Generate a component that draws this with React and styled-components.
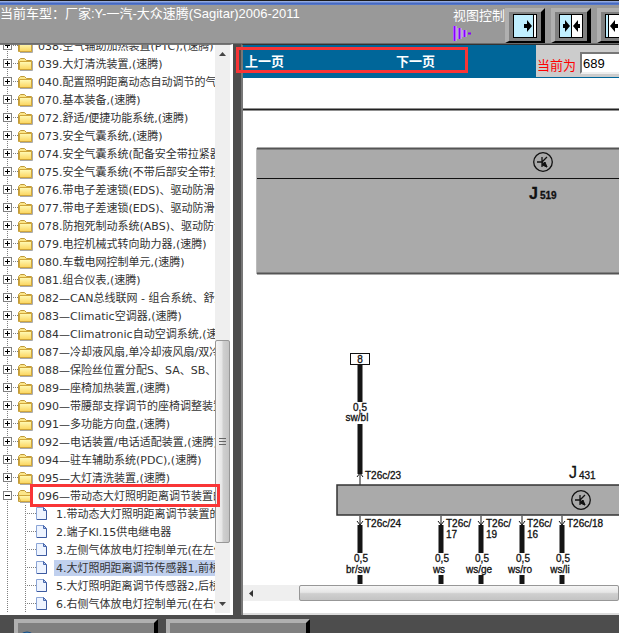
import React, { useState } from "react";
import styled, { createGlobalStyle } from "styled-components";

const GlobalStyle = createGlobalStyle`
  * {
    box-sizing: border-box;
  }
  body {
    margin: 0;
    font-family: "Liberation Sans", "Noto Sans CJK SC", sans-serif;
    font-size: 13px;
    overflow: hidden;
  }
`;

const Page = styled.div`
  display: flex;
  flex-direction: column;
  height: 100vh;
  overflow: hidden;
  background-color: #4d4d4d;
`;

const TitleStrip = styled.div`
  height: 5px;
  flex-shrink: 0;
  border-top: 1px solid #1a1a1a;
  background: linear-gradient(#a9bce8, #4468c0 60%, #5b7ccb);
`;

const Header = styled.header`
  display: flex;
  height: 39px;
  flex-shrink: 0;
  justify-content: space-between;
  background-color: #999;
  border-bottom: 1px solid #6b6b6b;
  color: #fff;
`;

const CarTitle = styled.h1`
  margin: 0;
  font-size: 13px;
  line-height: 17px;
  font-weight: normal;
  white-space: nowrap;
`;

const ViewControls = styled.div`
  display: flex;
  flex-shrink: 0;
  width: 166px;
  overflow: hidden;
  padding-top: 3px;
`;

const ControlLabel = styled.div`
  width: 52px;
  flex-shrink: 0;
  line-height: 16px;
  white-space: nowrap;

  svg {
    display: block;
    margin-top: 1px;
  }
`;

const ViewButton = styled.button`
  width: 40px;
  height: 35px;
  flex-shrink: 0;
  margin-right: 6px;
  padding: 2px 0 0;
  display: flex;
  justify-content: center;
  background-color: #808080;
  border: 4px solid;
  border-width: 4px 4px 2px 4px;
  border-color: #b0b0b0 #000 #000 #b0b0b0;
  cursor: pointer;
`;

const Body = styled.div`
  display: flex;
  flex: 1;
  min-height: 0;
`;

const Sidebar = styled.nav`
  position: relative;
  display: flex;
  width: 233px;
  flex-shrink: 0;
  background-color: #fff;
  border-top: 1px solid #777;
  border-right: 3px solid #fff;
  border-bottom: 2px solid #fff;
`;

const TreeArea = styled.div`
  flex: 1;
  min-width: 0;
  overflow: hidden;
`;

const Tree = styled.ul`
  list-style: none;
  margin: 0;
  padding: 0;
  font-family: "DejaVu Sans", "Noto Sans CJK SC", sans-serif;
  font-size: 11px;
`;

// the list is scrolled part of the way into its first row
const RootTree = styled(Tree)`
  margin-top: -8px;
`;

const Row = styled.div`
  display: flex;
  align-items: center;
  height: 18px;
  white-space: nowrap;
`;

const Toggle = styled.button`
  display: block;
  width: 18px;
  height: 18px;
  flex-shrink: 0;
  padding: 0;
  border: none;
  background: none;
`;

const RowIcon = styled.svg`
  display: block;
  flex-shrink: 0;
`;

const NodeLink = styled.a`
  margin-left: 3px;
  padding: 2px 2px 0;
  line-height: 14px;
  color: #333;
  text-decoration: none;
  background-color: ${(props) => (props.$selected ? "#c0d0ee" : "transparent")};
`;

const ScrollTrack = styled.div`
  display: flex;
  flex-direction: ${(props) => (props.$horizontal ? "row" : "column")};
  ${(props) => (props.$horizontal ? "height: 16px;" : "width: 15px;")}
  flex-shrink: 0;
  align-items: center;
  background-color: #efefef;
`;

const ScrollArrow = styled.button`
  width: 15px;
  height: 18px;
  flex-shrink: 0;
  display: flex;
  align-items: center;
  justify-content: center;
  padding: 0;
  border: none;
  background: none;
`;

const Spacer = styled.div`
  flex: ${(props) => props.$grow} 0 0;
`;

const Thumb = styled.div`
  display: flex;
  align-items: center;
  justify-content: center;
  border: 1px solid #979797;
  border-radius: 2px;
  flex: ${(props) => props.$grow} 0 0;
  align-self: stretch;
  background: linear-gradient(
    ${(props) => (props.$horizontal ? "to bottom" : "to right")},
    #f5f5f5,
    #e6e6e6 45%,
    #cfcfcf 55%,
    #c4c4c4
  );
`;

const RedBox = styled.div`
  position: absolute;
  border: 3px solid #f93536;
  pointer-events: none;
`;

const NodeMark = styled(RedBox)`
  top: 439px;
  left: 30px;
  width: 190px;
  height: 23px;
`;

const NavMark = styled(RedBox)`
  top: 2px;
  left: -7px;
  width: 232px;
  height: 26px;
`;

const Viewer = styled.main`
  display: flex;
  flex-direction: column;
  flex: 1;
  min-width: 0;
  margin-left: 8px;
  background-color: #fff;
  border-left: 2px solid #777;
  border-top: 1px solid #333;
`;

const PageNav = styled.div`
  position: relative;
  display: flex;
  height: 33px;
  flex-shrink: 0;
  background-color: #069;
`;

const NavLinks = styled.div`
  display: flex;
  flex: 1;
  min-width: 0;
  align-items: center;
`;

const NavLink = styled.a`
  width: 151px;
  flex-shrink: 0;
  padding: 0 0 2px 2px;
  color: #fff;
  font-weight: bold;
  text-decoration: none;

  & + & {
    width: auto;
  }
`;

const PageForm = styled.form`
  display: flex;
  align-items: center;
  width: 83px;
  height: 32px;
  flex-shrink: 0;
  overflow: hidden;
  padding: 4px 0 0 1px;
  background-color: #ccc;
  color: #f00;

  label {
    width: 43px;
    flex-shrink: 0;
    padding-top: 2px;
    white-space: nowrap;
  }
`;

const PageInput = styled.input`
  width: 60px;
  height: 22px;
  flex-shrink: 0;
  padding: 0 1px;
  border: 2px solid;
  border-color: #777 #eee #eee #777;
  background-color: #fff;
  font: 13px "Liberation Sans", sans-serif;
`;

const DiagramArea = styled.div`
  flex: 1;
  min-height: 0;
  overflow: hidden;
`;

const Diagram = styled.svg`
  display: block;
  font-family: "Liberation Sans", sans-serif;
  font-size: 10px;

  text {
    fill: #111;
    stroke: #111;
    stroke-width: 0.3px;
  }
`;

const ViewerFoot = styled.div`
  height: 14px;
  flex-shrink: 0;
  border-bottom: 2px solid #ddd;
`;

const BottomBar = styled.footer`
  display: flex;
  gap: 8px;
  height: 18px;
  flex-shrink: 0;
  padding: 4px 0 0 14px;
  overflow: hidden;
`;

const BarButton = styled.button`
  width: 144px;
  height: 36px;
  flex-shrink: 0;
  padding: 7px 0 0;
  text-align: left;
  background-color: #808080;
  border: 4px solid;
  border-color: #b0b0b0 #000 #000 #b0b0b0;

  svg {
    display: block;
  }
`;

const nodes = [
  "038.空气辅助加热装置(PTC),(速腾)",
  "039.大灯清洗装置,(速腾)",
  "040.配置照明距离动态自动调节的气体放电灯",
  "070.基本装备,(速腾)",
  "072.舒适/便捷功能系统,(速腾)",
  "073.安全气囊系统,(速腾)",
  "074.安全气囊系统(配备安全带拉紧器)",
  "075.安全气囊系统(不带后部安全带拉紧器)",
  "076.带电子差速锁(EDS)、驱动防滑系统",
  "077.带电子差速锁(EDS)、驱动防滑系统",
  "078.防抱死制动系统(ABS)、驱动防滑系统",
  "079.电控机械式转向助力器,(速腾)",
  "080.车载电网控制单元,(速腾)",
  "081.组合仪表,(速腾)",
  "082—CAN总线联网 - 组合系统、舒适系统",
  "083—Climatic空调器,(速腾)",
  "084—Climatronic自动空调系统,(速腾)",
  "087—冷却液风扇,单冷却液风扇/双冷却液风扇",
  "088—保险丝位置分配S、SA、SB、SC",
  "089—座椅加热装置,(速腾)",
  "090—带腰部支撑调节的座椅调整装置",
  "091—多功能方向盘,(速腾)",
  "092—电话装置/电话适配装置,(速腾)",
  "094—驻车辅助系统(PDC),(速腾)",
  "095—大灯清洗装置,(速腾)",
  "096—带动态大灯照明距离调节装置的大灯",
];

const pages = [
  "1.带动态大灯照明距离调节装置的大灯",
  "2.端子Kl.15供电继电器",
  "3.左侧气体放电灯控制单元(在左侧)",
  "4.大灯照明距离调节传感器1,前桥",
  "5.大灯照明距离调节传感器2,后桥",
  "6.右侧气体放电灯控制单元(在右侧)",
  "7.大灯照明距离调节控制单元",
];

const wires = [
  { x: 117, pin: ["T26c/24"], color: "br/sw" },
  { x: 198, pin: ["T26c/", "17"], color: "ws" },
  { x: 238, pin: ["T26c/", "19"], color: "ws/ge" },
  { x: 279, pin: ["T26c/", "16"], color: "ws/ro" },
  { x: 319, pin: ["T26c/18"], color: "ws/li" },
];

const ToggleIcon = ({ open }) => (
  <RowIcon width="18" height="18">
    <path d="M7.5 0V18M13 8.5H18" stroke="#808080" strokeDasharray="1 1" />
    <rect x="3.5" y="4.5" width="8" height="8" fill="#fff" stroke="#808080" />
    <path d={open ? "M5 8.5H10" : "M5 8.5H10M7.5 6V11"} stroke="#000" />
  </RowIcon>
);

const FolderIcon = ({ open }) => (
  <RowIcon width="15" height="18">
    <defs>
      <linearGradient id="folder" x1="0" y1="0" x2="0" y2="1">
        <stop offset="0" stopColor="#fffbb8" />
        <stop offset="1" stopColor="#fbd45c" />
      </linearGradient>
    </defs>
    <path d="M2 15.5H14.5V6" fill="none" stroke="#aaa" />
    <path d="M0.5 14.5V5.5L2.5 3.5H6.5L8.5 5.5H13.5V14.5Z" fill="#fbe68a" stroke="#c09a3a" />
    <path
      d={open ? "M0.5 8.5H14.5L12.5 14.5H2.5Z" : "M1.5 6.5H13.5V14.5H1.5Z"}
      fill="url(#folder)"
      stroke="#d0a63a"
    />
  </RowIcon>
);

const FileIcon = () => (
  <RowIcon width="51" height="18">
    <path d="M7.5 0V18M25.5 0V18M27 8.5H36" stroke="#808080" strokeDasharray="1 1" />
    <path d="M36.5 2.5H43.5L46.5 5.5V14.5H36.5Z" fill="#eef4ff" stroke="#8ba5d6" />
    <path d="M46.5 6V14.5H37" fill="none" stroke="#3c5aa0" />
    <path d="M43.5 2.5V5.5H46.5Z" fill="#b7cbf0" stroke="#4968ad" />
  </RowIcon>
);

const ViewIcon = ({ split, blue, arrows }) => (
  <svg width="24" height="24">
    <rect x="1" y="1" width="22" height="22" fill="#fff" />
    <rect x="1" y="1" width={blue} height="22" fill="#c0efff" />
    <rect x="0.5" y="0.5" width="23" height="23" fill="none" stroke="#000" />
    <path d={`M${split}.5 1V23`} stroke="#000" />
    <path d={arrows} fill="#000" />
  </svg>
);

const Transistor = ({ x, y }) => (
  <g transform={`translate(${x} ${y})`} stroke="#111" fill="none">
    <circle r="9.3" strokeWidth="1.3" />
    <path d="M-6 0H-1M-1 -5V5M4 -5L-1 0L4 5" strokeWidth="1.3" />
    <path d="M4 5L-1 3L2 0Z" fill="#111" />
  </g>
);

const WiringDiagram = () => (
  <Diagram width="800" height="507" role="img" aria-label="J519 / J431">
    <path d="M0 31.5H800" stroke="#222" strokeWidth="2" />
    <rect x="14" y="70" width="800" height="126" fill="#aaa" />
    <path d="M14 70.5H800M14 195.5H800" stroke="#555" strokeWidth="2" />
    <path d="M14 100.5H800" stroke="#111" />
    <path d="M13.5 70V196" stroke="#bbb" />
    <Transistor x={300} y={84} />
    <text x="286" y="121" fontSize="16" fontWeight="bold">J</text>
    <text x="297" y="121" fontWeight="bold">519</text>

    <rect x="107.5" y="275.5" width="19" height="11" fill="#fff" stroke="#111" />
    <text x="117" y="285" textAnchor="middle">8</text>
    <path d="M117 287V324M117 346V396" stroke="#151515" strokeWidth="5" />
    <path d="M114 399L117 395L120 399M117 395V407" fill="none" stroke="#151515" />
    <text x="117" y="333" textAnchor="middle">0,5</text>
    <text x="114" y="343" textAnchor="middle">sw/bl</text>
    <text x="122" y="401">T26c/23</text>

    <rect x="94" y="407" width="800" height="30" fill="#aaa" stroke="#333" strokeWidth="1.5" />
    <text x="326" y="400" fontSize="16">J</text>
    <text x="336" y="401">431</text>
    <Transistor x={338} y={422} />

    {wires.map(({ x, pin, color }) => (
      <g key={x}>
        <path d={`M${x} 438V448M${x - 3} 443L${x} 447L${x + 3} 443`} fill="none" stroke="#151515" />
        <path d={`M${x} 447V475M${x} 497V506`} stroke="#151515" strokeWidth="5" />
        {pin.map((line, i) => (
          <text key={line} x={x + 5} y={449 + i * 11}>{line}</text>
        ))}
        <text x={x + 1} y="484" textAnchor="middle">0,5</text>
        <text x={x - 2} y="495" textAnchor="middle">{color}</text>
      </g>
    ))}
  </Diagram>
);

const TreeNode = ({ label, children }) => {
  const [open, setOpen] = useState(Boolean(children));

  return (
    <li>
      <Row>
        <Toggle type="button" aria-label={label} aria-expanded={open} onClick={() => setOpen(!open)}>
          <ToggleIcon open={open} />
        </Toggle>
        <FolderIcon open={open} />
        <NodeLink href="#">{label}</NodeLink>
      </Row>
      {open && children}
    </li>
  );
};

export default function App() {
  const [selected, setSelected] = useState(3);
  const [page, setPage] = useState("689");

  return (
    <Page>
      <GlobalStyle />
      <TitleStrip />
      <Header>
        <CarTitle>当前车型：厂家:Y-一汽-大众速腾(Sagitar)2006-2011</CarTitle>
        <ViewControls>
          <ControlLabel>
            视图控制
            <svg width="20" height="17">
              <path d="M1.5 1V16M6.5 3V14M11.5 5V12" stroke="#d9b8ff" strokeWidth="4" />
              <path d="M1.5 1V16M6.5 3V14M11.5 5V12M15 8.5H18" stroke="#80f" strokeWidth="2" />
            </svg>
          </ControlLabel>
          <ViewButton type="button" aria-label="展开左侧">
            <ViewIcon split={20} blue={19} arrows="M11 10H14V6L19 12L14 18V14H11Z" />
          </ViewButton>
          <ViewButton type="button" aria-label="居中">
            <ViewIcon split={12} blue={11} arrows="M4 10H6V6L11 12L6 18V14H4ZM21 10H19V6L14 12L19 18V14H21Z" />
          </ViewButton>
          <ViewButton type="button" aria-label="展开右侧">
            <ViewIcon split={3} blue={2} arrows="M13 10H10V6L5 12L10 18V14H13Z" />
          </ViewButton>
        </ViewControls>
      </Header>

      <Body>
        <Sidebar>
          <TreeArea>
            <RootTree>
              {nodes.map((label, i) => (
                <TreeNode key={label} label={label}>
                  {i === nodes.length - 1 && (
                    <Tree>
                      {pages.map((name, j) => (
                        <li key={name}>
                          <Row>
                            <FileIcon />
                            <NodeLink
                              href="#"
                              $selected={j === selected}
                              onClick={() => setSelected(j)}
                            >
                              {name}
                            </NodeLink>
                          </Row>
                        </li>
                      ))}
                    </Tree>
                  )}
                </TreeNode>
              ))}
            </RootTree>
          </TreeArea>
          <ScrollTrack>
            <ScrollArrow type="button" aria-label="向上">
              <svg width="7" height="4"><path d="M0 4L3.5 0L7 4Z" fill="#444" /></svg>
            </ScrollArrow>
            <Spacer $grow={278} />
            <Thumb $grow={202}>
              <svg width="7" height="8">
                <path d="M0 0.5H7M0 3.5H7M0 6.5H7" stroke="#666" />
              </svg>
            </Thumb>
            <Spacer $grow={52} />
            <ScrollArrow type="button" aria-label="向下">
              <svg width="7" height="4"><path d="M0 0L3.5 4L7 0Z" fill="#444" /></svg>
            </ScrollArrow>
          </ScrollTrack>
          <NodeMark />
        </Sidebar>

        <Viewer>
          <PageNav>
            <NavLinks>
              <NavLink href="#">上一页</NavLink>
              <NavLink href="#">下一页</NavLink>
            </NavLinks>
            <PageForm onSubmit={(e) => e.preventDefault()}>
              <label htmlFor="page">当前为</label>
              <PageInput id="page" value={page} onChange={(e) => setPage(e.target.value)} />
            </PageForm>
            <NavMark />
          </PageNav>
          <DiagramArea>
            <WiringDiagram />
          </DiagramArea>
          <ScrollTrack $horizontal>
            <ScrollArrow type="button" aria-label="向左">
              <svg width="4" height="7"><path d="M4 0L0 3.5L4 7Z" fill="#333" /></svg>
            </ScrollArrow>
            <Spacer $grow={41} />
            <Thumb $horizontal $grow={320} />
          </ScrollTrack>
          <ViewerFoot />
        </Viewer>
      </Body>

      <BottomBar>
        <BarButton type="button" aria-label="浏览">
          <svg width="20" height="20">
            <circle cx="9" cy="10" r="9" fill="#2f7fc0" stroke="#1d4f80" />
          </svg>
        </BarButton>
        <BarButton type="button" aria-label="返回" />
      </BottomBar>
    </Page>
  );
}
